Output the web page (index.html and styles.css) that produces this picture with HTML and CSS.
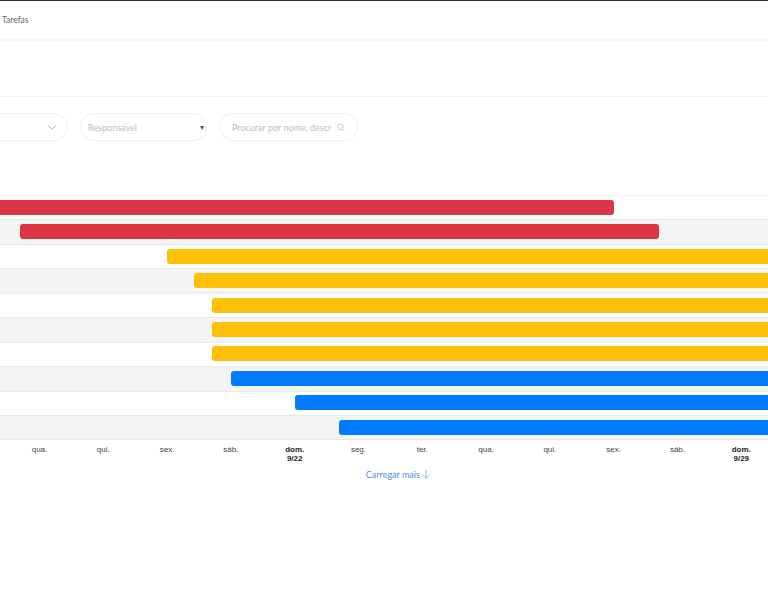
FILE: index.html
```html
<!DOCTYPE html>
<html lang="pt">
<head>
<meta charset="utf-8">
<title>Tarefas</title>
<link rel="stylesheet" href="styles.css">
</head>
<body>
<header class="topbar"><span class="crumb">Tarefas</span></header>
<div class="subheader"></div>
<div class="filters">
  <div class="pill pill-first">
    <svg class="chevron" width="8" height="5" viewBox="0 0 8 5"><path d="M.3.4 4 4.3 7.7.4" fill="none" stroke="#a9b3b3" stroke-width=".9"/></svg>
  </div>
  <div class="pill pill-select"><span class="placeholder">Responsável</span><span class="caret">▾</span></div>
  <div class="pill pill-search"><span class="placeholder clip">Procurar por nome, descr</span>
    <svg class="search" width="11" height="11" viewBox="0 0 11 11"><circle cx="4.6" cy="4.6" r="3.9" fill="none" stroke="#aeb6b6" stroke-width="1"/><path d="M7.5 7.5 10.6 10.6" stroke="#aeb6b6" stroke-width="1"/></svg>
  </div>
</div>
<section class="chart">
  <div class="row"><div class="bar red" style="margin-left:-20px;width:634px"></div></div>
  <div class="row alt"><div class="bar red" style="margin-left:20px;width:639px"></div></div>
  <div class="row"><div class="bar yellow" style="margin-left:167px;width:640px"></div></div>
  <div class="row alt"><div class="bar yellow" style="margin-left:194px;width:620px"></div></div>
  <div class="row"><div class="bar yellow" style="margin-left:212px;width:600px"></div></div>
  <div class="row alt"><div class="bar yellow" style="margin-left:212px;width:600px"></div></div>
  <div class="row"><div class="bar yellow" style="margin-left:212px;width:600px"></div></div>
  <div class="row alt"><div class="bar blue" style="margin-left:231px;width:600px"></div></div>
  <div class="row"><div class="bar blue" style="margin-left:295px;width:600px"></div></div>
  <div class="row alt"><div class="bar blue" style="margin-left:339px;width:600px"></div></div>
</section>
<div class="axis">
  <div class="tick">qua.</div>
  <div class="tick">qui.</div>
  <div class="tick">sex.</div>
  <div class="tick">sáb.</div>
  <div class="tick strong">dom.<br>9/22</div>
  <div class="tick">seg.</div>
  <div class="tick">ter.</div>
  <div class="tick">qua.</div>
  <div class="tick">qui.</div>
  <div class="tick">sex.</div>
  <div class="tick">sáb.</div>
  <div class="tick strong">dom.<br>9/29</div>
</div>
<div class="more"><a class="more-link">Carregar mais <svg class="arrow" width="8" height="9" viewBox="0 0 8 9"><path d="M4 0V8.3M.5 4.8 4 8.3 7.5 4.8" fill="none" stroke="#7fb0e8" stroke-width=".9"/></svg></a></div>
</body>
</html>
```
FILE: styles.css
```css
html, body {
  margin: 0;
  padding: 0;
  height: 610px;
  overflow: hidden;
  background: #fff;
}
body {
  font-family: Lato, sans-serif;
  color: #555;
}
.topbar {
  height: 38px;
  border-top: 1px solid #333;
  border-bottom: 2px solid #f5f6f6;
  display: flex;
  align-items: center;
  padding-left: 2px;
}
.crumb {
  font-size: 8.5px;
  color: #5f6666;
}
.subheader {
  height: 55px;
  border-bottom: 1px solid #eef1f1;
}
.filters {
  display: flex;
  gap: 12px;
  margin-top: 16px;
  height: 28px;
}
.pill {
  box-sizing: border-box;
  height: 28px;
  border: 1px solid #edf1f1;
  border-radius: 14px;
  display: flex;
  align-items: center;
  flex: none;
}
.pill-first {
  width: 168px;
  margin-left: -100px;
  justify-content: flex-end;
  padding-right: 11px;
}
.pill-select {
  width: 127px;
  padding: 0 2px 0 7px;
  justify-content: space-between;
}
.pill-search {
  width: 139px;
  padding: 0 12px;
  gap: 8px;
}
.placeholder {
  font-size: 9px;
  color: #b9c0c0;
  white-space: nowrap;
}
.clip {
  width: 97px;
  flex: none;
}
.caret {
  font-size: 8px;
  color: #555;
  font-family: "DejaVu Sans", sans-serif;
}
.chart {
  margin-top: 54px;
  border-top: 1px solid #f2f3f3;
}
.row {
  box-sizing: border-box;
  height: 24.45px;
  border-bottom: 1px solid #e9eaea;
  padding-top: 3.8px;
  overflow: hidden;
}
.row.alt {
  background: #f4f4f4;
}
.bar {
  height: 15px;
  border-radius: 3px;
}
.red { background: #dc3545; }
.yellow { background: #ffc107; }
.blue { background: #007bff; }
.axis {
  display: flex;
  padding-left: 7.6px;
  margin-top: 5px;
  height: 17px;
}
.tick {
  width: 63.8px;
  flex: none;
  text-align: center;
  font-family: "Liberation Sans", sans-serif;
  font-size: 8px;
  line-height: 9px;
  color: #444;
}
.tick.strong {
  font-weight: 700;
  color: #222;
}
.more {
  text-align: center;
  margin-top: 0;
  padding-left: 28px;
}
.more-link {
  font-size: 9px;
  line-height: 12px;
  color: #4a90e2;
}
.arrow {
  vertical-align: -1px;
}
```
